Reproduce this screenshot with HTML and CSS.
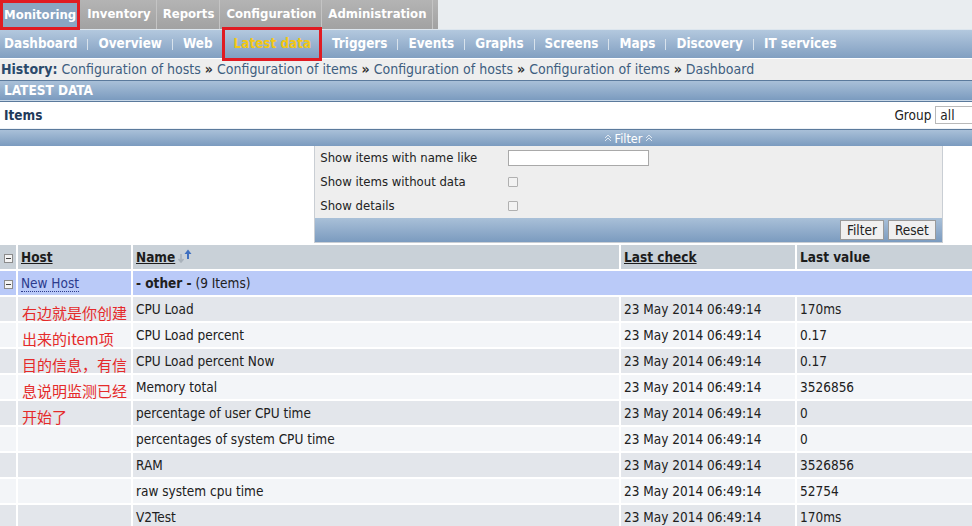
FILE: index.html
```html
<!DOCTYPE html>
<html>
<head>
<meta charset="utf-8">
<link rel="stylesheet" href="styles.css">
</head>
<body>
<div class="page">
  <div class="topbar">
    <div class="tabs">
      <span class="tab sel">Monitoring</span><span class="tab">Inventory</span><span class="tab">Reports</span><span class="tab">Configuration</span><span class="tab">Administration</span>
    </div>
  </div>
  <div class="subnav">
    <span class="sub">Dashboard</span><span class="sep"></span>
    <span class="sub">Overview</span><span class="sep"></span>
    <span class="sub">Web</span>
    <span class="sub cur">Latest data</span>
    <span class="sub">Triggers</span><span class="sep"></span>
    <span class="sub">Events</span><span class="sep"></span>
    <span class="sub">Graphs</span><span class="sep"></span>
    <span class="sub">Screens</span><span class="sep"></span>
    <span class="sub">Maps</span><span class="sep"></span>
    <span class="sub">Discovery</span><span class="sep"></span>
    <span class="sub">IT services</span>
  </div>
  <div class="history">
    <b>History:</b> <a>Configuration of hosts</a> <span class="raq">&raquo;</span> <a>Configuration of items</a> <span class="raq">&raquo;</span> <a>Configuration of hosts</a> <span class="raq">&raquo;</span> <a>Configuration of items</a> <span class="raq">&raquo;</span> <a>Dashboard</a>
  </div>
  <div class="hdr">LATEST DATA</div>
  <div class="itemsbar">
    <span class="items-title">Items</span>
    <span class="selects"><span>Group</span><span class="sel-box">all</span><span>Host</span><span class="sel-box">all</span></span>
  </div>
  <div class="filterbar">
    <svg class="chev" width="8" height="8" viewBox="0 0 8 8"><path d="M1 4 L4 1 L7 4 M1 7 L4 4 L7 7" fill="none" stroke="#dfe7f0" stroke-width="1"/></svg>
    <span>Filter</span>
    <svg class="chev" width="8" height="8" viewBox="0 0 8 8"><path d="M1 4 L4 1 L7 4 M1 7 L4 4 L7 7" fill="none" stroke="#dfe7f0" stroke-width="1"/></svg>
  </div>
  <div class="filterwrap">
    <div class="filterbox">
      <div class="frows">
        <div class="frow"><span class="flabel">Show items with name like</span><span class="finput"></span></div>
        <div class="frow"><span class="flabel">Show items without data</span><span class="fcheck"></span></div>
        <div class="frow"><span class="flabel">Show details</span><span class="fcheck"></span></div>
      </div>
      <div class="fbottom"><span class="btn">Filter</span><span class="btn">Reset</span></div>
    </div>
  </div>
  <table class="data">
    <colgroup>
      <col class="c-ic"><col class="c-host"><col class="c-name"><col class="c-check"><col class="c-val"><col class="c-chg"><col class="c-gr">
    </colgroup>
    <thead>
      <tr class="head">
        <th class="ic"><span class="minus"></span></th>
        <th><u>Host</u></th>
        <th><u>Name</u><svg class="sort" width="16" height="14" viewBox="0 0 16 14"><path d="M4 13 L4 5 M1.5 10 L4 13 L6.5 10" fill="none" stroke="#a9b2bb" stroke-width="1.6"/><path d="M11 0.5 L7.5 5 L10 5 L10 10 L12 10 L12 5 L14.5 5 Z" fill="#3f70c0"/></svg></th>
        <th><u>Last check</u></th>
        <th>Last value</th>
        <th><u>Change</u></th>
        <th>History</th>
      </tr>
    </thead>
    <tbody>
      <tr class="grp">
        <td class="ic"><span class="minus"></span></td>
        <td><a class="hostlink">New Host</a></td>
        <td colspan="5"><b>- other -</b> (9 Items)</td>
      </tr>
      <tr class="odd"><td></td><td></td><td>CPU Load</td><td>23 May 2014 06:49:14</td><td>170ms</td><td></td><td></td></tr>
      <tr class="even"><td></td><td></td><td>CPU Load percent</td><td>23 May 2014 06:49:14</td><td>0.17</td><td></td><td></td></tr>
      <tr class="odd"><td></td><td></td><td>CPU Load percent Now</td><td>23 May 2014 06:49:14</td><td>0.17</td><td></td><td></td></tr>
      <tr class="even"><td></td><td></td><td>Memory total</td><td>23 May 2014 06:49:14</td><td>3526856</td><td></td><td></td></tr>
      <tr class="odd"><td></td><td></td><td>percentage of user CPU time</td><td>23 May 2014 06:49:14</td><td>0</td><td></td><td></td></tr>
      <tr class="even"><td></td><td></td><td>percentages of system CPU time</td><td>23 May 2014 06:49:14</td><td>0</td><td></td><td></td></tr>
      <tr class="odd"><td></td><td></td><td>RAM</td><td>23 May 2014 06:49:14</td><td>3526856</td><td></td><td></td></tr>
      <tr class="even"><td></td><td></td><td>raw system cpu time</td><td>23 May 2014 06:49:14</td><td>52754</td><td></td><td></td></tr>
      <tr class="odd"><td></td><td></td><td>V2Test</td><td>23 May 2014 06:49:14</td><td>170ms</td><td></td><td></td></tr>
    </tbody>
  </table>
  <div class="note">右边就是你创建<br>出来的item项<br>目的信息，有信<br>息说明监测已经<br>开始了</div>
</div>
</body>
</html>
```

FILE: styles.css
```css
html, body { margin: 0; padding: 0; overflow: hidden; background: #fff; }
body { font-family: "DejaVu Sans Condensed", "DejaVu Sans", sans-serif; font-size: 13px; color: #202020; }
.page { width: 1257px; position: relative; }

.topbar { height: 29px; background: #e9edf0; display: flex; border-bottom: 1px solid #dde6ee; }
.tabs { display: flex; background: linear-gradient(#b4b4b4, #a2a2a2); padding-right: 5px; }
.tab { color: #fff; font-weight: bold; font-size: 13px; padding: 0 5px 0 6px; line-height: 28px; border-right: 1px solid #c4c4c4; height: 29px; box-sizing: border-box; }
.tab.sel { background: #8aa5c2; border: 3px solid #e01b22; line-height: 23px; padding: 0 1px; height: 30px; }
.tab.sel + .tab { padding-left: 7px; }

.subnav { height: 28px; background: linear-gradient(#b3c8de, #819fc1); display: flex; align-items: center; padding-left: 4px; }
.sub { color: #fff; font-weight: bold; font-size: 13.4px; line-height: 28px; position: relative; }
.sub.cur { color: #f3c713; padding: 0 11px 0 12px; margin: 0 10px 0 9px; }
.sub.cur::after { content: ""; position: absolute; left: 0; right: 0; top: -3px; bottom: -3px; border: 3px solid #e01b22; }
.sep { width: 1px; height: 11px; background: #d8e2ec; margin: 0 10px; }

.history { height: 21px; line-height: 21px; background: #eeeeee; padding-left: 1px; color: #3e5e80; font-size: 14px; border-top: 1px solid #fff; white-space: nowrap; }
.history b { color: #2b4a6c; }
.raq { color: #333; font-weight: bold; }

.hdr { height: 19px; line-height: 19px; background: linear-gradient(#a9c0d8, #7b9bbf); border-top: 1px solid #5b7a9c; border-bottom: 1px solid #c8d8e8; color: #fff; font-weight: bold; font-size: 13.5px; padding-left: 4px; }

.itemsbar { height: 26px; display: flex; align-items: center; justify-content: space-between; padding: 0 4px; background: #fff; border-top: 1px solid #5b7a9c; border-bottom: 1px solid #eef2f6; }
.items-title { font-weight: bold; color: #1f3a5a; font-size: 13.5px; }
.selects { font-size: 13.5px; color: #222; display: flex; align-items: center; gap: 4px; }
.sel-box { display: inline-block; width: 137px; box-sizing: border-box; border: 1px solid #b9b9b9; padding: 0 4px; line-height: 16px; background: #fff; margin-right: 4px; }

.filterbar { height: 16px; background: linear-gradient(#a9c0d8, #7b9bbf); border-top: 1px solid #5b7a9c; display: flex; align-items: center; justify-content: center; gap: 3px; color: #fff; font-size: 12.5px; }
.chev { display: block; }

.filterwrap { display: flex; justify-content: center; }
.filterbox { width: 50%; background: #eeeeee; border: 1px solid #c9ced4; border-top: none; box-sizing: border-box; }
.frows { padding: 0 5px; }
.frow { display: flex; align-items: center; height: 24px; }
.flabel { width: 188px; font-size: 13px; color: #222; padding-bottom: 1px; }
.finput { width: 139px; height: 14px; background: #fff; border: 1px solid #a9a9a9; }
.fcheck { width: 8px; height: 8px; border: 1px solid #b0b0b0; background: #f2f2f2; border-radius: 1px; }
.fbottom { height: 24px; background: linear-gradient(#a9c0d8, #7b9bbf); display: flex; align-items: center; justify-content: flex-end; gap: 4px; padding-right: 6px; }
.btn { font-size: 13.5px; color: #222; background: #f0f0f0; border: 1px solid #9a9a9a; padding: 0 6px; line-height: 18px; }

.data { border-collapse: separate; border-spacing: 2px; margin-left: -2px; table-layout: fixed; width: 1261px; }
.c-ic { width: 16px; } .c-host { width: 113px; } .c-name { width: 486px; } .c-check { width: 174px; } .c-val { width: 200px; } .c-chg { width: 120px; }
.data th, .data td { height: 24px; padding: 0 0 0 3px; text-align: left; font-size: 13.5px; white-space: nowrap; overflow: hidden; box-sizing: border-box; }
.data th { background: #c9d1d8; font-weight: bold; color: #1c1c1c; }
.data th u { text-decoration: underline; }
.data .ic { padding: 0; text-align: center; }
.sort { vertical-align: -1px; margin-left: 2px; }
.minus { display: inline-block; width: 7px; height: 7px; border: 1px solid #8c8c8c; background: #f4f4f4 linear-gradient(#444, #444) center / 5px 1px no-repeat; vertical-align: middle; }
.grp td { background: #bacaf8; }
.hostlink { color: #2c3a8c; border-bottom: 1px dotted #2c3a8c; }
.odd td { background: #e3e6eb; }
.even td { background: #f3f5f8; }

.note { position: absolute; left: 22px; top: 300px; font-family: "Noto Sans CJK SC", sans-serif; font-size: 15px; line-height: 26px; color: #e52a2a; }
```
